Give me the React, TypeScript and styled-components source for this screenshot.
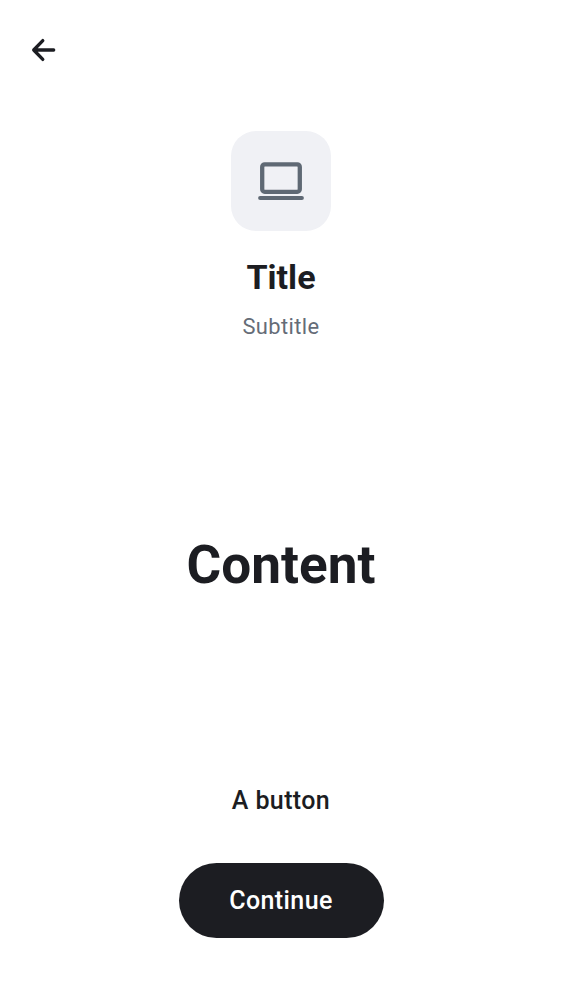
import React from "react";
import styled, { createGlobalStyle } from "styled-components";

const GlobalStyle = createGlobalStyle`
  * { box-sizing: border-box; }
  body { margin: 0; background: #ffffff; font-family: Roboto, sans-serif; color: #1c1d22; }
  button { font: inherit; color: inherit; border: 0; padding: 0; background: none; cursor: pointer; }
`;

const Screen = styled.div`
  display: flex;
  flex-direction: column;
  height: 1000px;
`;

const TopBar = styled.header`
  display: flex;
  align-items: center;
  height: 100px;
  padding-left: 25px;
`;

const BackButton = styled.button`
  display: flex;
  width: 36px;
  height: 36px;
`;

const Header = styled.section`
  display: flex;
  flex-direction: column;
  align-items: center;
  padding-top: 31px;
`;

const IconTile = styled.div`
  display: flex;
  align-items: center;
  justify-content: center;
  width: 100px;
  height: 100px;
  border-radius: 25px;
  background: #f0f1f5;
`;

const Title = styled.h1`
  margin: 25px 0 0;
  font-size: 34.1px;
  font-weight: 700;
  line-height: 42px;
`;

const Subtitle = styled.p`
  margin: 14px 0 0;
  font-size: 21.9px;
  line-height: 30px;
  letter-spacing: 0.39px;
  color: #656c77;
`;

const Content = styled.main`
  display: flex;
  flex: 1;
  align-items: center;
  justify-content: center;
  padding-top: 26px;
  font-size: 53.1px;
  font-weight: 700;
`;

const Actions = styled.footer`
  display: flex;
  flex-direction: column;
  align-items: center;
  gap: 25px;
  padding-bottom: 62.5px;
`;

const ActionButton = styled.button<{ $filled?: boolean }>`
  width: 205px;
  height: 75px;
  padding-top: 1px;
  border-radius: 38px;
  font-size: 25px;
  font-weight: 500;
  letter-spacing: 0.39px;
  ${({ $filled }) => $filled && "background: #1c1d22; color: #ffffff;"}
`;

export default function App() {
  return (
    <>
      <GlobalStyle />
      <Screen>
        <TopBar>
          <BackButton aria-label="Back">
            <svg width="36" height="36" viewBox="0 0 36 36" fill="none" stroke="#1c1d22" strokeWidth="3.3" strokeLinecap="round" strokeLinejoin="round">
              <path d="M28.7 18H8.7M17.8 8.6L8.7 18L17.8 27.4" />
            </svg>
          </BackButton>
        </TopBar>
        <Header>
          <IconTile>
            <svg width="50" height="50" viewBox="0 0 50 50" fill="none" stroke="#5f6974" strokeWidth="4.3" strokeLinecap="round">
              <rect x="6.2" y="8.4" width="37.6" height="27.4" rx="2.5" />
              <path d="M4.1 42H45.9" strokeWidth="4" />
            </svg>
          </IconTile>
          <Title>Title</Title>
          <Subtitle>Subtitle</Subtitle>
        </Header>
        <Content>Content</Content>
        <Actions>
          <ActionButton>A button</ActionButton>
          <ActionButton $filled>Continue</ActionButton>
        </Actions>
      </Screen>
    </>
  );
}
